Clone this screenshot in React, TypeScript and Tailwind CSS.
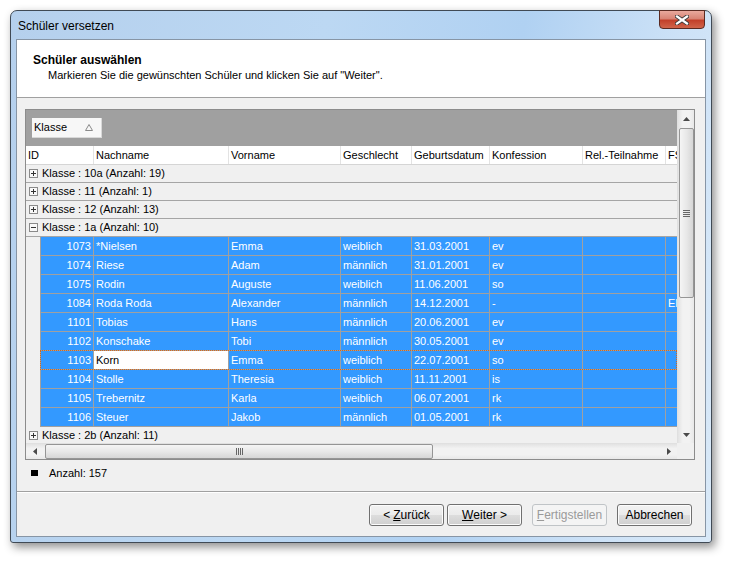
import React from "react";

const F = '"Liberation Sans", Arial, sans-serif';

const widths = [53, 135, 112, 71, 78, 93, 83, 100];
const headers = ["ID", "Nachname", "Vorname", "Geschlecht", "Geburtsdatum", "Konfession", "Rel.-Teilnahme", "FS"];

const rows: string[][] = [
  ["1073", "*Nielsen", "Emma", "weiblich", "31.03.2001", "ev", "", ""],
  ["1074", "Riese", "Adam", "männlich", "31.01.2001", "ev", "", ""],
  ["1075", "Rodin", "Auguste", "weiblich", "11.06.2001", "so", "", ""],
  ["1084", "Roda Roda", "Alexander", "männlich", "14.12.2001", "-", "", "EN"],
  ["1101", "Tobias", "Hans", "männlich", "20.06.2001", "ev", "", ""],
  ["1102", "Konschake", "Tobi", "männlich", "30.05.2001", "ev", "", ""],
  ["1103", "Korn", "Emma", "weiblich", "22.07.2001", "so", "", ""],
  ["1104", "Stolle", "Theresia", "weiblich", "11.11.2001", "is", "", ""],
  ["1105", "Trebernitz", "Karla", "weiblich", "06.07.2001", "rk", "", ""],
  ["1106", "Steuer", "Jakob", "männlich", "01.05.2001", "rk", "", ""],
];

function PlusBox({ minus }: { minus?: boolean }) {
  return (
    <svg width="9" height="9" viewBox="0 0 9 9" className="shrink-0">
      <rect x="0.5" y="0.5" width="8" height="8" fill="#f8f8f8" stroke="#8a8a8a" />
      <line x1="2" y1="4.5" x2="7" y2="4.5" stroke="#333" />
      {!minus && <line x1="4.5" y1="2" x2="4.5" y2="7" stroke="#333" />}
    </svg>
  );
}

function GroupRow({ label, minus }: { label: string; minus?: boolean }) {
  return (
    <div className="h-[18px] shrink-0 flex items-center border-b border-[#a5a5a5] bg-[#f0f0f0] pl-[3px] gap-[4px] text-[11px] text-black whitespace-nowrap">
      <PlusBox minus={minus} />
      <span>{label}</span>
    </div>
  );
}

function Arrow({ dir }: { dir: "up" | "down" | "left" | "right" }) {
  const pts =
    dir === "up" ? "0,4 7,4 3.5,0" : dir === "down" ? "0,0 7,0 3.5,4" : dir === "left" ? "4,0 4,7 0,3.5" : "0,0 0,7 4,3.5";
  const w = dir === "up" || dir === "down" ? 7 : 4;
  const h = dir === "up" || dir === "down" ? 4 : 7;
  return (
    <svg width={w} height={h} viewBox={`0 0 ${w} ${h}`}>
      <polygon points={pts} fill="#4a4a4a" />
    </svg>
  );
}

function Button({ children, disabled }: { children: React.ReactNode; disabled?: boolean }) {
  return (
    <div
      className={
        "w-[75px] h-[22px] rounded-[3px] border flex items-center justify-center text-[12px] " +
        (disabled
          ? "border-[#c0c4c7] bg-[#f4f4f4] text-[#9a9a9a]"
          : "border-[#707070] bg-[linear-gradient(#f2f2f2_0%,#ebebeb_50%,#dddddd_51%,#cfcfcf_100%)] text-black shadow-[inset_0_0_0_1px_#fcfcfc]")
      }
    >
      {children}
    </div>
  );
}

export default function App() {
  return (
    <div className="w-[730px] h-[562px] bg-white pt-[10px] pl-[10px] overflow-hidden" style={{ fontFamily: F }}>
      <div className="w-[702px] h-[533px] rounded-t-[7px] rounded-b-[3px] border border-[#404a55] shadow-[3px_4px_10px_rgba(0,0,0,0.45)] bg-[linear-gradient(100deg,#b5d0ed_0%,#bcd8f3_40%,#b0d1f2_65%,#cde2f7_85%,#d9e9f8_100%)] flex flex-col">
        {/* title bar */}
        <div className="h-[28px] flex items-start justify-between">
          <div className="pl-[7px] pt-[8px] text-[12px] text-black leading-[14px]">Schüler versetzen</div>
          <div className="mr-[6px] -mt-[1px] w-[46px] h-[19px] rounded-b-[4px] border border-[#5a2a22] bg-[linear-gradient(#e9a99d_0%,#d88475_45%,#c2402a_55%,#d0644a_100%)] flex items-center justify-center">
            <svg width="14" height="10" viewBox="0 0 14 10">
              <path d="M2 1.5 L12 8.5 M12 1.5 L2 8.5" stroke="#3a3a3a" strokeWidth="4" strokeLinecap="square" />
              <path d="M2 1.5 L12 8.5 M12 1.5 L2 8.5" stroke="#ffffff" strokeWidth="2.2" strokeLinecap="square" />
            </svg>
          </div>
        </div>
        {/* client */}
        <div className="mx-[5px] h-[498px] border border-[#8795a5] bg-[#f0f0f0] flex flex-col">
          <div className="h-[58px] shrink-0 bg-white border-b border-[#a0a0a0] pl-[16px] pt-[13px]">
            <div className="text-[12px] font-bold leading-[14px] text-black">Schüler auswählen</div>
            <div className="pl-[15px] text-[11px] leading-[14px] pt-[1px] text-black">
              Markieren Sie die gewünschten Schüler und klicken Sie auf "Weiter".
            </div>
          </div>
          {/* grid */}
          <div className="mt-[11px] ml-[8px] w-[670px] h-[351px] shrink-0 border border-[#8c8c8c] flex flex-col bg-[#f0f0f0]">
            <div className="flex h-[333px]">
              <div className="w-[651px] h-[333px] overflow-hidden flex flex-col">
                <div className="h-[36px] shrink-0 bg-[#a0a0a0] pt-[8px] pl-[6px]">
                  <div className="w-[70px] h-[20px] bg-[#f7f7f7] border-b border-r border-[#d8d8d8] flex items-center justify-between pl-[2px] pr-[8px] text-[11px] text-black">
                    <span>Klasse</span>
                    <svg width="8" height="7" viewBox="0 0 8 7">
                      <polygon points="0.5,6.5 7.5,6.5 4,0.5" fill="none" stroke="#8a8a8a" />
                    </svg>
                  </div>
                </div>
                <div className="h-[19px] shrink-0 bg-white border-b border-[#d5d5d5] flex text-[11px] text-black whitespace-nowrap">
                  {headers.map((h, i) => (
                    <div
                      key={h}
                      className="shrink-0 border-r border-[#e3e3e3] pl-[2px] flex items-center overflow-hidden"
                      style={{ width: i === 0 ? widths[0] + 15 : widths[i] }}
                    >
                      {h}
                    </div>
                  ))}
                </div>
                <GroupRow label="Klasse : 10a (Anzahl: 19)" />
                <GroupRow label="Klasse : 11 (Anzahl: 1)" />
                <GroupRow label="Klasse : 12 (Anzahl: 13)" />
                <GroupRow label="Klasse : 1a (Anzahl: 10)" minus />
                <div className="pl-[14px] bg-[#f0f0f0] shrink-0">
                  {rows.map((r) => {
                    const focus = r[0] === "1103";
                    return (
                      <div key={r[0]} className="relative h-[19px] flex border-l border-b border-[#a0a0a0] bg-[#3399ff] text-[11px] whitespace-nowrap">
                        {r.map((c, ci) => (
                          <div
                            key={ci}
                            className={
                              "shrink-0 h-[18px] border-r border-[#a0a0a0] flex items-center overflow-hidden " +
                              (ci === 0 ? "justify-end pr-[2px] " : "pl-[2px] ") +
                              (focus && ci === 1 ? "bg-white text-black" : "text-white")
                            }
                            style={{ width: widths[ci] }}
                          >
                            {c}
                          </div>
                        ))}
                        {focus && (
                          <div className="absolute left-[-1px] right-0 top-[-1px] bottom-[-1px] border border-dotted border-[#d2691e] pointer-events-none" />
                        )}
                      </div>
                    );
                  })}
                </div>
                <GroupRow label="Klasse : 2b (Anzahl: 11)" />
              </div>
              {/* vertical scrollbar */}
              <div className="w-[17px] h-[333px] bg-[linear-gradient(90deg,#e3e3e3,#f2f2f2_30%,#f2f2f2_70%,#e8e8e8)] border-l border-[#e0e0e0] flex flex-col items-center">
                <div className="h-[17px] w-full flex items-center justify-center">
                  <Arrow dir="up" />
                </div>
                <div className="mt-[1px] w-[15px] h-[170px] rounded-[2px] border border-[#959595] bg-[linear-gradient(90deg,#f5f5f5,#e8e8e8_50%,#d6d6d6)] flex items-center justify-center">
                  <div className="flex flex-col gap-[1px]">
                    <div className="w-[7px] h-[1px] bg-[#666]" />
                    <div className="w-[7px] h-[1px] bg-[#666]" />
                    <div className="w-[7px] h-[1px] bg-[#666]" />
                    <div className="w-[7px] h-[1px] bg-[#666]" />
                  </div>
                </div>
                <div className="flex-1" />
                <div className="h-[17px] w-full flex items-center justify-center">
                  <Arrow dir="down" />
                </div>
              </div>
            </div>
            {/* horizontal scrollbar */}
            <div className="flex h-[16px]">
              <div className="w-[651px] h-[16px] bg-[linear-gradient(#e3e3e3,#f2f2f2_30%,#f2f2f2_70%,#e8e8e8)] border-t border-[#e0e0e0] flex items-center">
                <div className="w-[17px] h-full flex items-center justify-center">
                  <Arrow dir="left" />
                </div>
                <div className="ml-[2px] w-[388px] h-[15px] rounded-[2px] border border-[#959595] bg-[linear-gradient(#f5f5f5,#e8e8e8_50%,#d6d6d6)] flex items-center justify-center">
                  <div className="flex gap-[1px]">
                    <div className="w-[1px] h-[7px] bg-[#666]" />
                    <div className="w-[1px] h-[7px] bg-[#666]" />
                    <div className="w-[1px] h-[7px] bg-[#666]" />
                    <div className="w-[1px] h-[7px] bg-[#666]" />
                  </div>
                </div>
                <div className="flex-1" />
                <div className="w-[17px] h-full flex items-center justify-center">
                  <Arrow dir="right" />
                </div>
              </div>
              <div className="w-[17px] h-[16px] bg-[#f0f0f0]" />
            </div>
          </div>
          {/* Anzahl */}
          <div className="mt-[6px] h-[14px] shrink-0 flex items-center pl-[14px] text-[11px] text-black">
            <div className="w-[7px] h-[6px] bg-black" />
            <span className="ml-[11px]">Anzahl: 157</span>
          </div>
          <div className="mt-[11px] h-[1px] shrink-0 bg-[#a0a0a0]" />
          <div className="h-[1px] shrink-0 bg-white" />
          <div className="mt-[11px] flex justify-end pr-[13px]">
            <Button>
              &lt; <span className="underline ml-[3px]">Z</span>urück
            </Button>
            <div className="w-[3px]" />
            <Button>
              <span className="underline">W</span>eiter &gt;
            </Button>
            <div className="w-[10px]" />
            <Button disabled>
              <span className="underline">F</span>ertigstellen
            </Button>
            <div className="w-[10px]" />
            <Button>Abbrechen</Button>
          </div>
        </div>
      </div>
    </div>
  );
}
